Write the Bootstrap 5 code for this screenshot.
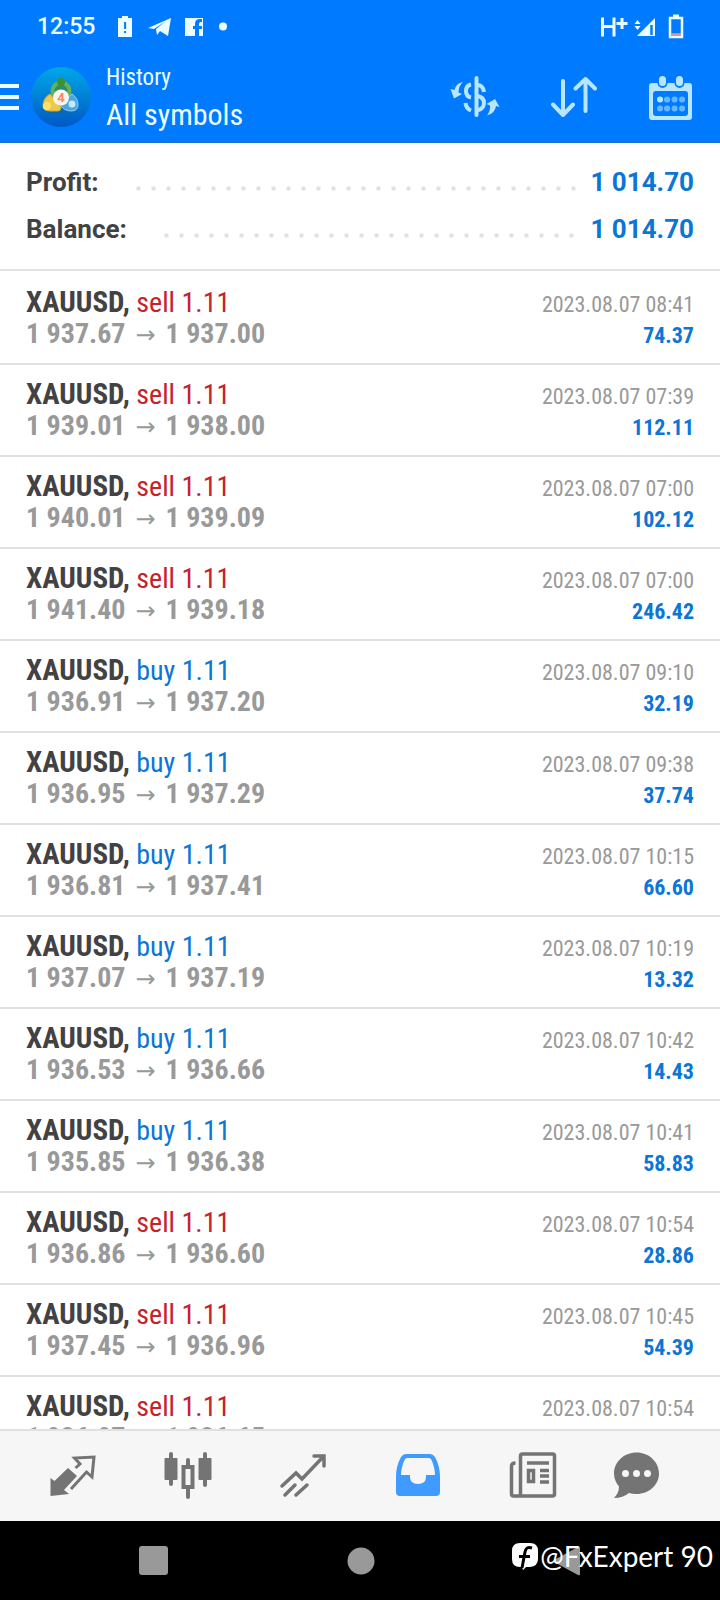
<!DOCTYPE html>
<html lang="en">
<head>
<meta charset="utf-8">
<meta name="viewport" content="width=device-width, initial-scale=1">
<title>History</title>
<link href="https://cdn.jsdelivr.net/npm/bootstrap@5.3.0/dist/css/bootstrap.min.css" rel="stylesheet">
<style>
:root{--brand:#007aff;--ink:#424244;--muted:#999;--value:#0b76d6;--sell:#c4222c;--rule:#e1e1e2;--pale:#b9e6ff}
body{font-family:"Roboto Condensed","Roboto",sans-serif;color:var(--ink);background:#fff}
.screen{height:100vh}
.topbar{background:var(--brand);color:#ecfdff}
.statusbar{height:52px;padding:2px 36px 0 37px;font:500 23px/50px "Roboto",sans-serif}
.status-icons{margin-left:22px}
.appbar{height:91px;border-bottom:1px solid #1a6fd0}
.appbar .btn,.tabs .btn{color:inherit;border:0;border-radius:0}
.app-logo{margin-left:12px}
.heading{margin-left:15px;padding-top:4px}
.head-sub{font-size:23px;line-height:32px}
.head-title{font-size:30px;line-height:42px}
.actions{color:var(--pale);gap:51px;padding:2px 26px 0 0}
.summary{padding:16px 26px 16px;border-bottom:2px solid var(--rule);font:700 26px/47px "Roboto",sans-serif}
.leader{margin:0 9px 0 32px;height:47px;background:radial-gradient(circle,#dedede 1px,transparent 3px) 0 22px/15px 15px repeat-x}
.amount{color:var(--value)}
.deals{flex:1 1 0;overflow:hidden;padding-top:2px}
.deals .list-group-item{padding:13px 26px;color:inherit;border:solid var(--rule);border-width:0 0 2px;font-size:28px;line-height:32px}
.deal-line{height:32px}
.sym{font-weight:700;font-size:29px}
.sell{color:var(--sell)}
.buy{color:var(--value)}
.prices{font-weight:700;color:var(--muted)}
.prices i{font:400 24px/24px "DejaVu Sans",sans-serif;margin:0 10px}
.when{font-size:22px;color:var(--muted)}
.gain{font-size:22px;font-weight:700;color:var(--value)}
.tabs{background:#f6f6f6;border-top:2px solid var(--rule);height:92px;padding:0 38px 2px 15px;color:#747474}
.tabs .btn{flex:5 1 0}
.tabs .btn:last-child{flex-grow:4}
.tabs svg{display:block;margin:auto}
.tabs .active{color:#3f9bff}
.sysbar{background:#000;height:79px;padding:0 139px}
.credit{right:7px;top:18px;color:#fff;gap:2px;font:400 28px/34px "Lato",sans-serif}
</style>
</head>
<body>
<div class="screen d-flex flex-column">
<header class="topbar">
  <div class="statusbar d-flex align-items-center">
    <span>12:55</span>
    <svg class="status-icons" width="112" height="24" viewBox="0 0 112 24" fill="currentColor" aria-hidden="true">
      <path d="M1 3h4V1h6v2h4v19H1z"/><path d="M7.100 7h2v7h-2zM7.100 16h2v2h-2z" fill="#007aff"/>
      <path d="M31 13 54 3l-3 18-8-5-3 4-1-6 10-8-12 8z"/>
      <path fill-rule="evenodd" d="M68 3h18v18h-4v-7h3v-3h-3V9q0-2 2-2h1V4h-2q-5 0-5 5v2h-2v3h2v7H68z"/>
      <circle cx="106" cy="11.500" r="4"/>
    </svg>
    <svg class="ms-auto" width="84" height="26" viewBox="0 0 84 26" fill="none" stroke="currentColor" aria-hidden="true">
      <path d="M2.500 3.500v19M14 3.500v19M2.500 12.500H14" stroke-width="3"/>
      <path d="M16.500 9.500h11M22 4v11" stroke-width="3"/>
      <path d="m34.500 10 3-4 3 4zm0 2 3 4 3-4zM37 22 55 4v18z" fill="currentColor" stroke="none"/>
      <path d="M51.500 11v10" stroke="#007aff" stroke-width="2.500"/>
      <path d="M70 4h12v19H70z" stroke-width="2.500"/><path d="M73 2h6" stroke-width="3"/><path d="M71 20.500h10" stroke="#e49a8c" stroke-width="2.500"/>
    </svg>
  </div>
  <div class="appbar d-flex align-items-center">
    <button class="btn p-0" aria-label="Menu"><svg class="d-block" width="19" height="28" viewBox="0 0 19 28" fill="currentColor"><path d="M0 1h19v4H0zM0 12h19v4H0zM0 23h19v4H0z"/></svg></button>
    <svg class="app-logo flex-shrink-0" width="60" height="60" viewBox="0 0 60 60" aria-hidden="true">
      <defs><linearGradient id="g" x2="0" y2="1"><stop stop-color="#00a8e8"/><stop offset="1" stop-color="#0059c4"/></linearGradient></defs>
      <circle cx="30" cy="30" r="30" fill="url(#g)"/>
      <path d="M18 46 12 43l1-8 8-10h18l8 10-1 8-8 3z" fill="#0b6a9c" opacity=".7"/>
      <circle cx="30" cy="24" r="8.500" fill="#2d8f6a" stroke="#62b35c" stroke-width="4"/>
      <path d="M19 27q-7 4-7 12 0 5 7 5h8q3 0 3-4z" fill="#edc94a" stroke="#cfa93a"/>
      <path d="M41 27q6 4 6 11 0 6-7 6-8 0-11-7z" fill="#4ba7e2" stroke="#8fd0f5"/>
      <circle cx="30" cy="15" r="4" fill="#3f8f33"/><circle cx="16" cy="39" r="4" fill="#ffe26a"/><circle cx="41" cy="37" r="3.500" fill="#c5e9ff"/>
      <circle cx="30" cy="30.500" r="8" fill="#fff4ee"/>
      <text x="30" y="35" text-anchor="middle" font-family="Roboto" font-weight="700" font-size="13" fill="#f08a5c">4</text>
    </svg>
    <div class="heading">
      <div class="head-sub">History</div>
      <div class="head-title">All symbols</div>
    </div>
    <div class="actions d-flex ms-auto">
      <button class="btn p-0" aria-label="Symbols"><svg class="d-block" width="50" height="44" viewBox="0 0 50 44" fill="none" stroke="currentColor" stroke-width="4">
        <path d="M26.500 2v37" stroke-linecap="round"/>
        <path d="M21 8.500q-5 1-5 6.500t5 6.500M15.500 27q.5 5.500 5.500 7.500M27 9q6 0 7 7M27 20q7 1 7 7t-7 7.500"/>
        <path d="M13 6Q6 7 4.500 14L.500 13l3.500 9.500 8-4.500-3.500-1.500Q8.500 10 13 6zM37 39.500q8-2 9-9.500l3.500 1-4.500-8-8.500 5 3.500 1.500q.5 5.500-3 10z" fill="currentColor" stroke="none"/></svg></button>
      <button class="btn p-0" aria-label="Sort"><svg class="d-block" width="46" height="44" viewBox="0 0 46 44" fill="none" stroke="currentColor" stroke-width="4" stroke-linecap="round" stroke-linejoin="round"><path d="M12 5v34M2 28.500 12 39l10-10.500M34.500 35V3M24.500 12.500 34.500 3 44 12.500"/></svg></button>
      <button class="btn p-0" aria-label="Period"><svg class="d-block" width="46" height="46" viewBox="0 0 46 46" fill="none" stroke="currentColor">
        <path fill-rule="evenodd" stroke="none" fill="currentColor" d="M4 8h37q3 0 3 3v31q0 3-3 3H4q-3 0-3-3V11q0-3 3-3zm4 8q-3 0-3 3v19q0 3 3 3h29q3 0 3-3V19q0-3-3-3z"/>
        <path d="M14.500 6v2M31.500 6v2" stroke="#007aff" stroke-width="10" stroke-linecap="round"/><path d="M14.500 4.500v3M31.500 4.500v3" stroke-width="7" stroke-linecap="round"/>
        <path d="M19 24.500h.1m7.400 0h.1m7.400 0h.1M12 33.500h.1m6.900 0h.1m7.400 0h.1m7.400 0h.1" stroke="#66b5ff" stroke-width="6" stroke-linecap="round"/><path d="M12 24.500h.1" stroke-width="6" stroke-linecap="round"/></svg></button>
    </div>
  </div>
</header>

<section class="summary">
  <div class="d-flex"><span>Profit:</span><span class="leader flex-grow-1"></span><span class="amount">1 014.70</span></div>
  <div class="d-flex"><span>Balance:</span><span class="leader flex-grow-1"></span><span class="amount">1 014.70</span></div>
</section>

<main class="deals">
<ul class="list-group list-group-flush">
  <li class="list-group-item">
    <div class="deal-line d-flex justify-content-between align-items-baseline"><span><span class="sym">XAUUSD,</span> <span class="sell">sell 1.11</span></span><span class="when">2023.08.07 08:41</span></div>
    <div class="deal-line d-flex justify-content-between align-items-baseline"><span class="prices">1 937.67<i>→</i>1 937.00</span><span class="gain">74.37</span></div>
  </li>
  <li class="list-group-item">
    <div class="deal-line d-flex justify-content-between align-items-baseline"><span><span class="sym">XAUUSD,</span> <span class="sell">sell 1.11</span></span><span class="when">2023.08.07 07:39</span></div>
    <div class="deal-line d-flex justify-content-between align-items-baseline"><span class="prices">1 939.01<i>→</i>1 938.00</span><span class="gain">112.11</span></div>
  </li>
  <li class="list-group-item">
    <div class="deal-line d-flex justify-content-between align-items-baseline"><span><span class="sym">XAUUSD,</span> <span class="sell">sell 1.11</span></span><span class="when">2023.08.07 07:00</span></div>
    <div class="deal-line d-flex justify-content-between align-items-baseline"><span class="prices">1 940.01<i>→</i>1 939.09</span><span class="gain">102.12</span></div>
  </li>
  <li class="list-group-item">
    <div class="deal-line d-flex justify-content-between align-items-baseline"><span><span class="sym">XAUUSD,</span> <span class="sell">sell 1.11</span></span><span class="when">2023.08.07 07:00</span></div>
    <div class="deal-line d-flex justify-content-between align-items-baseline"><span class="prices">1 941.40<i>→</i>1 939.18</span><span class="gain">246.42</span></div>
  </li>
  <li class="list-group-item">
    <div class="deal-line d-flex justify-content-between align-items-baseline"><span><span class="sym">XAUUSD,</span> <span class="buy">buy 1.11</span></span><span class="when">2023.08.07 09:10</span></div>
    <div class="deal-line d-flex justify-content-between align-items-baseline"><span class="prices">1 936.91<i>→</i>1 937.20</span><span class="gain">32.19</span></div>
  </li>
  <li class="list-group-item">
    <div class="deal-line d-flex justify-content-between align-items-baseline"><span><span class="sym">XAUUSD,</span> <span class="buy">buy 1.11</span></span><span class="when">2023.08.07 09:38</span></div>
    <div class="deal-line d-flex justify-content-between align-items-baseline"><span class="prices">1 936.95<i>→</i>1 937.29</span><span class="gain">37.74</span></div>
  </li>
  <li class="list-group-item">
    <div class="deal-line d-flex justify-content-between align-items-baseline"><span><span class="sym">XAUUSD,</span> <span class="buy">buy 1.11</span></span><span class="when">2023.08.07 10:15</span></div>
    <div class="deal-line d-flex justify-content-between align-items-baseline"><span class="prices">1 936.81<i>→</i>1 937.41</span><span class="gain">66.60</span></div>
  </li>
  <li class="list-group-item">
    <div class="deal-line d-flex justify-content-between align-items-baseline"><span><span class="sym">XAUUSD,</span> <span class="buy">buy 1.11</span></span><span class="when">2023.08.07 10:19</span></div>
    <div class="deal-line d-flex justify-content-between align-items-baseline"><span class="prices">1 937.07<i>→</i>1 937.19</span><span class="gain">13.32</span></div>
  </li>
  <li class="list-group-item">
    <div class="deal-line d-flex justify-content-between align-items-baseline"><span><span class="sym">XAUUSD,</span> <span class="buy">buy 1.11</span></span><span class="when">2023.08.07 10:42</span></div>
    <div class="deal-line d-flex justify-content-between align-items-baseline"><span class="prices">1 936.53<i>→</i>1 936.66</span><span class="gain">14.43</span></div>
  </li>
  <li class="list-group-item">
    <div class="deal-line d-flex justify-content-between align-items-baseline"><span><span class="sym">XAUUSD,</span> <span class="buy">buy 1.11</span></span><span class="when">2023.08.07 10:41</span></div>
    <div class="deal-line d-flex justify-content-between align-items-baseline"><span class="prices">1 935.85<i>→</i>1 936.38</span><span class="gain">58.83</span></div>
  </li>
  <li class="list-group-item">
    <div class="deal-line d-flex justify-content-between align-items-baseline"><span><span class="sym">XAUUSD,</span> <span class="sell">sell 1.11</span></span><span class="when">2023.08.07 10:54</span></div>
    <div class="deal-line d-flex justify-content-between align-items-baseline"><span class="prices">1 936.86<i>→</i>1 936.60</span><span class="gain">28.86</span></div>
  </li>
  <li class="list-group-item">
    <div class="deal-line d-flex justify-content-between align-items-baseline"><span><span class="sym">XAUUSD,</span> <span class="sell">sell 1.11</span></span><span class="when">2023.08.07 10:45</span></div>
    <div class="deal-line d-flex justify-content-between align-items-baseline"><span class="prices">1 937.45<i>→</i>1 936.96</span><span class="gain">54.39</span></div>
  </li>
  <li class="list-group-item">
    <div class="deal-line d-flex justify-content-between align-items-baseline"><span><span class="sym">XAUUSD,</span> <span class="sell">sell 1.11</span></span><span class="when">2023.08.07 10:54</span></div>
    <div class="deal-line d-flex justify-content-between align-items-baseline"><span class="prices">1 936.97<i>→</i>1 936.65</span></div>
  </li>
</ul>
</main>

<nav class="tabs d-flex align-items-center" aria-label="Sections">
  <button class="btn p-0" aria-label="Quotes"><svg width="48" height="48" viewBox="0 0 48 48" fill="none" stroke="currentColor" stroke-width="3"><path d="M1.500 45V27l4 3L19 17l9 8-13 14 5 4z" fill="currentColor" stroke="none"/><path d="m26.500 17 4.500-4-5.500-6L45 6l-2 20-5.500-5L22 38" stroke-linejoin="miter"/></svg></button>
  <button class="btn p-0" aria-label="Charts"><svg width="48" height="48" viewBox="0 0 48 48" fill="none" stroke="currentColor" stroke-width="4" stroke-linecap="round"><path d="M7 3v30M41 3v31M24 9v6M24 37v9"/><path d="M0.500 8q0-1 1-1h11q1 0 1 1v20q0 1-1 1h-11q-1 0-1-1zM34.500 8q0-1 1-1h11q1 0 1 1v20q0 1-1 1h-11q-1 0-1-1z" fill="currentColor" stroke="none"/><path d="M19.500 16h9v20h-9z"/></svg></button>
  <button class="btn p-0" aria-label="Trade"><svg width="48" height="48" viewBox="0 0 48 48" fill="none" stroke="currentColor" stroke-width="3.500" stroke-linecap="round"><path d="M3 35 17 22l6 6L44 6M35 5h10v10M6 44l10-10M17 44l11-10"/></svg></button>
  <button class="btn p-0 active" aria-label="History"><svg width="48" height="48" viewBox="0 0 48 48" fill="currentColor"><path fill-rule="evenodd" d="M12 3h24q3 0 5 3 5 9 5 20v15q0 4-4 4H6q-4 0-4-4V26Q2 15 7 6q2-3 5-3zm1 4q-2 0-3 3-3 8-3 14h9v2q0 7 8 7t8-7v-2h9q0-6-3-14-1-3-3-3z"/></svg></button>
  <button class="btn p-0" aria-label="News"><svg width="48" height="48" viewBox="0 0 48 48" fill="none" stroke="currentColor" stroke-width="3.500"><path d="M11.500 45V5q0-2 2-2h30q2 0 2 2v38q0 2-2 2H4.500q-2 0-2-2V15q0-3 4-3"/><path d="M18 12h22M31 19.500h9M31 25h9M31 31h9M19.500 19.500h5v11h-5z"/></svg></button>
  <button class="btn p-0" aria-label="Messages"><svg width="48" height="48" viewBox="0 0 48 48" fill="currentColor"><path fill-rule="evenodd" d="M24.500 1.500C12 1.500 2 11 2 22.500c0 5 2 9.500 5 13Q7 42 2 47q9 0 15-5 3 1 7.500 1C37 43 47 34 47 22.500S37 1.500 24.500 1.500zM13.500 19a3.500 3.500 0 1 1 0 7 3.500 3.500 0 0 1 0-7zm11 0a3.500 3.500 0 1 1 0 7 3.500 3.500 0 0 1 0-7zm11 0a3.500 3.500 0 1 1 0 7 3.500 3.500 0 0 1 0-7z"/></svg></button>
</nav>

<footer class="sysbar position-relative d-flex align-items-center justify-content-between">
  <svg width="29" height="29" aria-hidden="true"><rect width="29" height="29" rx="3" fill="#999"/></svg>
  <svg width="28" height="28" aria-hidden="true"><circle cx="14" cy="14" r="13.500" fill="#999"/></svg>
  <svg width="28" height="30" viewBox="0 0 28 30" aria-hidden="true"><path d="M1 14 25 1q2-1 2 1v26q0 2-2 1L1 16q-1-1 0-2z" fill="#999"/></svg>
  <div class="credit position-absolute d-flex align-items-center">
    <svg width="26" height="28" viewBox="0 0 26 28" fill="#fff" aria-hidden="true"><path d="M8 1h10q8 0 8 8v8q0 7-8 8h-4l-3 3-1-3H8q-8 0-8-8V9q0-8 8-8z"/><path d="M20 6q-6-2-7 4l-3 16M7 14.500h11" fill="none" stroke="#000" stroke-width="3"/></svg>
    <span>@FxExpert 90</span>
  </div>
</footer>
</div>
<script src="https://cdn.jsdelivr.net/npm/bootstrap@5.3.0/dist/js/bootstrap.bundle.min.js"></script>
</body>
</html>
